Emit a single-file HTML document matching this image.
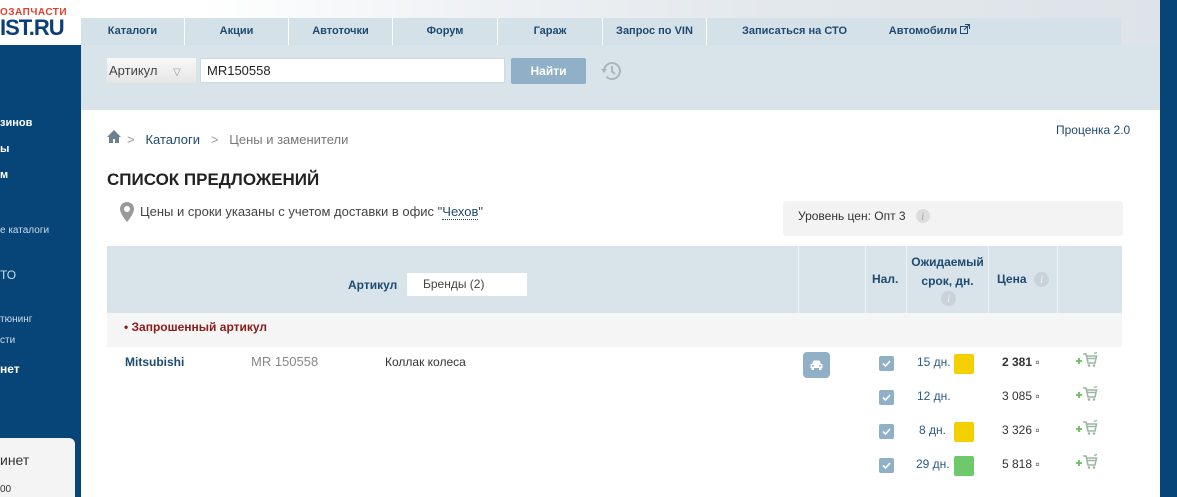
<!DOCTYPE html><html><head><meta charset="utf-8"><style>
body{margin:0;width:1177px;height:497px;overflow:hidden;font-family:"Liberation Sans",sans-serif;background:#fff;position:relative;font-size:12px}
.a{position:absolute}
.nav{left:81px;top:18px;width:1040px;height:27px;background:#d5e1e8;display:flex}
.nav div{border-right:1px solid #fff;text-align:center;line-height:27px;font-size:11px;font-weight:bold;color:#1f4a70;white-space:nowrap}
.side div{color:#fff;font-size:11px;position:absolute;left:0}
.th{color:#1f4a70;font-weight:bold;font-size:12px}
.sq{width:20px;height:20px;border-radius:2px}
.pr{font-size:12px;font-weight:bold;color:#333}
.dy{font-size:12px;color:#2b5a85}
</style></head><body>
<div class="a" style="left:200px;top:0;width:960px;height:45px;background:linear-gradient(90deg,#fff,#eef1f4 30%,#e3e8ec 60%,#dde3e8)"></div>
<div class="a" style="left:0;top:7px;font-size:10px;font-weight:bold;color:#e0402a;letter-spacing:.5px">ОЗАПЧАСТИ</div>
<div class="a" style="left:0;top:15px;font-size:22px;font-weight:bold;color:#0c3f7a;letter-spacing:-1px">IST.RU</div>
<div class="a nav">
<div style="width:103px">Каталоги</div><div style="width:103px">Акции</div><div style="width:103px">Автоточки</div><div style="width:104px">Форум</div><div style="width:104px">Гараж</div><div style="width:103px">Запрос по VIN</div><div style="width:175px;border:0">Записаться на СТО</div><div style="width:95px;border:0">Автомобили <svg width="10" height="10" viewBox="0 0 10 10"><rect x="0.5" y="2.5" width="7" height="7" fill="none" stroke="#1f4a70"/><path d="M5 0.5h4.5v4.5M9.5 0.5L4 6" fill="none" stroke="#1f4a70"/></svg></div></div>
<div class="a" style="left:81px;top:45px;width:1079px;height:65px;background:#d9e4ea"></div>
<div class="a" style="left:107px;top:58px;width:89px;height:25px;background:linear-gradient(#f8f8f8,#e6e6e6);color:#444;font-size:13px;line-height:25px;text-indent:2px">Артикул <span style="color:#999;font-size:10px;margin-left:12px">▽</span></div>
<div class="a" style="left:200px;top:58px;width:305px;height:25px;background:#fff;border:1px solid #cfd8de;box-sizing:border-box;font-size:13px;line-height:23px;padding-left:6px;color:#222">MR150558</div>
<div class="a" style="left:511px;top:58px;width:75px;height:26px;background:#8fb0c6;color:#fff;font-weight:bold;text-align:center;line-height:26px;font-size:12px;border-radius:2px">Найти</div>
<svg class="a" style="left:600px;top:60px" width="22" height="22" viewBox="0 0 22 22"><path d="M4 11a8 8 0 1 1 2.5 5.8" fill="none" stroke="#aab6bf" stroke-width="2"/><path d="M1 9l3 4 3-4z" fill="#aab6bf"/><path d="M12 6v5.5l3 2.5" fill="none" stroke="#aab6bf" stroke-width="2"/></svg>
<div class="a" style="left:0;top:45px;width:81px;height:452px;background:#074477"></div>
<div class="a" style="left:1160px;top:0;width:17px;height:497px;background:#074477"></div>
<div class="side">
<div style="top:117px;font-weight:bold">зинов</div>
<div style="top:143px;font-weight:bold">ы</div>
<div style="top:169px;font-weight:bold">м</div>
<div style="top:225px;font-size:10px;color:#cde">е каталоги</div>
<div style="top:268px;font-size:12px;color:#cde">ТО</div>
<div style="top:314px;font-size:10px;color:#cde">тюнинг</div>
<div style="top:335px;font-size:10px;color:#cde">сти</div>
<div style="top:362px;font-weight:bold;font-size:12px">нет</div>
</div>
<div class="a" style="left:0;top:438px;width:75px;height:59px;background:#f4f4f4;border-radius:0 6px 0 0"></div>
<div class="a" style="left:0;top:452px;font-size:14px;color:#333">инет</div>
<div class="a" style="left:0;top:484px;font-size:10px;color:#333">00</div>
<svg class="a" style="left:107px;top:130px" width="14" height="13" viewBox="0 0 14 13"><path d="M7 0L0 7h2v6h4V9h2v4h4V7h2z" fill="#6d8090"/></svg>
<div class="a" style="left:127px;top:132px;font-size:13px;color:#777"><span style="color:#999">&gt;</span>&nbsp;&nbsp; <span style="color:#1f4a70">Каталоги</span> &nbsp;&nbsp;<span style="color:#999">&gt;</span>&nbsp;&nbsp; Цены и заменители</div>
<div class="a" style="left:1056px;top:123px;font-size:12px;color:#1f4a70">Проценка 2.0</div>
<div class="a" style="left:107px;top:170px;font-size:17px;font-weight:bold;color:#222">СПИСОК ПРЕДЛОЖЕНИЙ</div>
<svg class="a" style="left:120px;top:202px" width="14" height="20" viewBox="0 0 14 20"><path d="M7 0a7 7 0 0 0-7 7c0 5 7 13 7 13s7-8 7-13a7 7 0 0 0-7-7z" fill="#999"/><circle cx="7" cy="7" r="3" fill="#fff"/></svg>
<div class="a" style="left:140px;top:204px;font-size:13px;color:#444">Цены и сроки указаны с учетом доставки в офис "<span style="color:#1f4a70;border-bottom:1px dotted #1f4a70">Чехов</span>"</div>
<div class="a" style="left:783px;top:201px;width:340px;height:35px;background:#f3f3f3;border-radius:3px;font-size:12px;color:#333;line-height:30px;text-indent:15px">Уровень цен: Опт 3 &nbsp; <span style="display:inline-block;width:14px;height:14px;border-radius:50%;background:#ddd;color:#aaa;font-style:italic;text-indent:0;text-align:center;line-height:14px;font-family:'Liberation Serif'">i</span></div>
<div class="a" style="left:107px;top:246px;width:1015px;height:67px;background:#d8e3ea"></div>
<div class="a" style="left:798px;top:246px;width:1px;height:67px;background:#eef3f6"></div>
<div class="a" style="left:865px;top:246px;width:1px;height:67px;background:#eef3f6"></div>
<div class="a" style="left:906px;top:246px;width:1px;height:67px;background:#eef3f6"></div>
<div class="a" style="left:988px;top:246px;width:1px;height:67px;background:#eef3f6"></div>
<div class="a" style="left:1057px;top:246px;width:1px;height:67px;background:#eef3f6"></div>
<div class="a th" style="left:348px;top:278px">Артикул</div>
<div class="a" style="left:407px;top:273px;width:120px;height:23px;background:#fff;font-size:12px;color:#444;line-height:23px;text-indent:16px">Бренды (2)</div>
<div class="a th" style="left:872px;top:272px">Нал.</div>
<div class="a th" style="left:907px;top:253px;width:81px;text-align:center;line-height:19px">Ожидаемый<br>срок, дн.</div>
<div class="a" style="left:941px;top:291px;width:15px;height:15px;border-radius:50%;background:#c9d2d8;color:#eee;font-style:italic;text-align:center;line-height:15px;font-family:'Liberation Serif'">i</div>
<div class="a th" style="left:997px;top:272px">Цена</div>
<div class="a" style="left:1034px;top:272px;width:15px;height:15px;border-radius:50%;background:#c9d2d8;color:#eee;font-style:italic;text-align:center;line-height:15px;font-family:'Liberation Serif'">i</div>
<div class="a" style="left:107px;top:313px;width:1015px;height:34px;background:#f5f5f5"></div>
<div class="a" style="left:124px;top:320px;font-size:12px;font-weight:bold;color:#8b1a1a">• Запрошенный артикул</div>
<div class="a" style="left:125px;top:355px;font-size:12px;font-weight:bold;color:#1f4a70">Mitsubishi</div>
<div class="a" style="left:251px;top:354px;font-size:13px;color:#888">MR 150558</div>
<div class="a" style="left:385px;top:355px;font-size:12px;color:#333">Коллак колеса</div>
<div class="a" style="left:803px;top:352px;width:27px;height:26px;background:#8fb0c6;border-radius:4px"><svg style="position:absolute;left:7px;top:8px" width="13" height="10" viewBox="0 0 13 10"><path d="M2 4l1.5-3.5h6L11 4h1.5v4h-12V4z" fill="#fff"/><rect x="1.5" y="7" width="2.5" height="3" fill="#fff"/><rect x="9" y="7" width="2.5" height="3" fill="#fff"/><circle cx="3" cy="5.8" r="0.9" fill="#8fb0c6"/><circle cx="10" cy="5.8" r="0.9" fill="#8fb0c6"/></svg></div>
<svg width="0" height="0" style="position:absolute"><defs>
<g id="ck"><rect width="15" height="15" rx="2" fill="#8fb0c6"/><path d="M4 7.5l2.5 2.5L11 5" fill="none" stroke="#fff" stroke-width="1.6"/></g>
<g id="ct"><path d="M0 9h6M3 6v6" stroke="#6cbf5c" stroke-width="1.8"/><path d="M7 2h3l2 9h7l1.5-7H11M10.5 6.5H19.5" fill="none" stroke="#9cb7a3" stroke-width="1.6"/><circle cx="13" cy="13.5" r="1.3" fill="#9cb7a3"/><circle cx="18" cy="13.5" r="1.3" fill="#9cb7a3"/><path d="M18 1.5l3-1" stroke="#9cb7a3" stroke-width="1.4"/></g></defs></svg>
<svg class="a" style="left:879px;top:356px" width="15" height="15"><use href="#ck"/></svg><div class="a dy" style="left:917px;top:355px">15 дн.</div><div class="a sq" style="left:954px;top:354px;background:#f5d000"></div><div class="a pr" style="left:1002px;top:355px">2 381 ▫</div><svg class="a" style="left:1076px;top:352px" width="24" height="16"><use href="#ct"/></svg>
<svg class="a" style="left:879px;top:390px" width="15" height="15"><use href="#ck"/></svg><div class="a dy" style="left:917px;top:389px">12 дн.</div><div class="a pr" style="left:1002px;top:389px;font-weight:normal">3 085 ▫</div><svg class="a" style="left:1076px;top:386px" width="24" height="16"><use href="#ct"/></svg>
<svg class="a" style="left:879px;top:424px" width="15" height="15"><use href="#ck"/></svg><div class="a dy" style="left:919px;top:423px">8 дн.</div><div class="a sq" style="left:954px;top:422px;background:#f5d000"></div><div class="a pr" style="left:1002px;top:423px;font-weight:normal">3 326 ▫</div><svg class="a" style="left:1076px;top:420px" width="24" height="16"><use href="#ct"/></svg>
<svg class="a" style="left:879px;top:458px" width="15" height="15"><use href="#ck"/></svg><div class="a dy" style="left:916px;top:457px">29 дн.</div><div class="a sq" style="left:954px;top:456px;background:#6ec96a"></div><div class="a pr" style="left:1002px;top:457px;font-weight:normal">5 818 ▫</div><svg class="a" style="left:1076px;top:454px" width="24" height="16"><use href="#ct"/></svg>
</body></html>
